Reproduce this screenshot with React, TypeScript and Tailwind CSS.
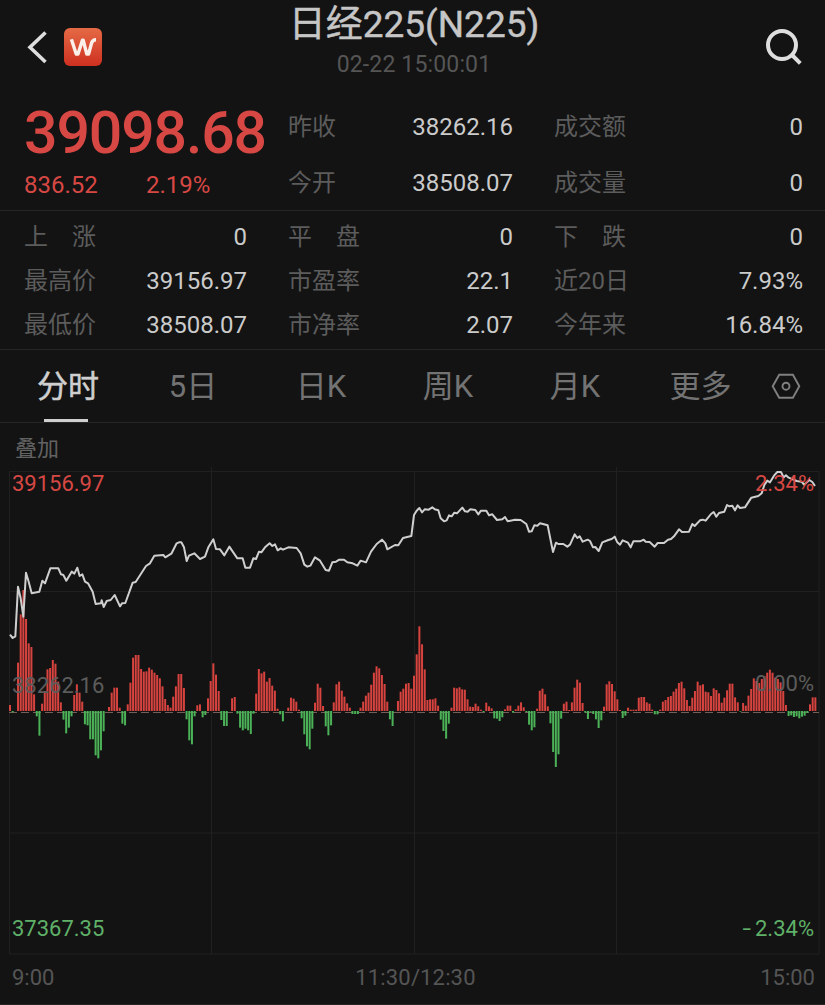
import React from "react";

const BASE = 711;
const STEP = 2.6756;

// Per-minute bars, in thirds of a pixel; negative values hang below the axis.
const bars: number[] = [
  18, -4, 0, 145, 290, 363, 276, 203, 192, 50, -16, -74, 22, 60, 125, 129, 153, 142, 88, 26,
  -26, -67, -50, -16, 48, 80, 55, 28, -40, -43, -85, -85, -133, -142, -118, -61, 0, 12, 55, 70,
  70, 10, -38, -43, 20, 85, 160, 168, 168, 126, 118, 119, 130, 124, 115, 108, 98, 74, 36, 18,
  10, 43, 74, 111, 111, 69, -25, -88, -100, -16, 17, 20, -19, -12, 38, 90, 143, 109, 60, -27,
  -45, -45, 0, 38, 42, -8, -50, -58, -53, -58, -69, -8, 52, 126, 113, 118, 88, 99, 76, 61,
  7, -10, -31, 0, 10, 40, 37, 28, 4, -22, -70, -106, -115, -53, 25, 82, 70, 15, -46, -73,
  -43, 26, 80, 88, 61, 43, 23, 10, -9, -9, -9, 10, 28, 46, 55, 79, 115, 134, 128, 108,
  81, 28, -25, -45, 0, 30, 58, 67, 82, 84, 67, 106, 170, 254, 200, 125, 33, 35, 35, 38,
  16, -26, -60, -83, -38, 10, 70, 68, 71, 65, 64, 35, 13, 12, 22, 14, 4, -3, 25, 14,
  8, -22, -23, -30, -19, 5, 16, 16, -5, 5, 16, 26, 11, -3, -41, -58, -49, 7, 61, 67,
  50, 14, -37, -123, -168, -130, -23, 22, 28, 3, 26, 70, 94, 85, 24, -5, -24, -2, -9, -25,
  -51, -28, 13, 80, 89, 81, 59, 35, 3, -21, -14, 10, 4, 4, 4, 40, 42, 42, 26, 22,
  4, -10, -10, 4, 28, 33, 42, 45, 58, 67, 84, 88, 68, 33, 15, 40, 60, 88, 77, 80,
  58, 56, 45, 68, 63, 53, 25, 40, 62, 82, 82, 41, 26, -2, 24, 16, 46, 66, 98, 90,
  84, 96, 105, 115, 124, 115, 100, 96, 86, 60, 18, -15, -13, -18, -16, -22, -17, -14, -6, 20,
  41, 41,
];

type Segment = [number, string];

// Price polyline, in thirds of a pixel, grouped by horizontal offset.
const segments: Segment[] = [
  [0, "30,524 38,534 46,529 54,380 62,415 70,470 78,338 86,365 95,400 118,395 127,362 135,370 151,325 175,325 183,343 190,345 199,362 215,335 223,341 232,323 239,348 247,343 255,365 264,370 278,395 287,432 303,430 305,421 311,441 320,423 332,420 344,405 360,439 366,430 376,429 398,368 407,366 438,318 450,310 463,287 490,285 496,292 514,281 530,250 537,247 544,247 552,262 560,303 567,287 583,280 600,297"],
  [600, "15,290 25,262 40,238 48,267 60,268 73,286 88,260 112,295 128,295 136,323 150,323 160,295 168,297 177,275 184,277 195,262 209,250 217,258 225,253 233,271 242,265 249,269 265,262 290,264 302,280 313,314 322,320 331,317 345,292 360,302 377,330 387,332 397,307 408,305 418,299 432,299 442,307 458,310 472,317 482,302 498,307 513,275 530,252 546,239 556,250 562,268 585,255 595,256"],
  [1200, "9,234 34,228 42,165 50,152 58,144 66,157 74,148 86,149 97,142 104,148 115,151 122,175 132,184 140,181 147,166 155,169 163,158 171,160 187,143 195,154 203,155 211,148 226,150 235,163 243,152 259,152 267,166 277,163 291,180 307,178 315,171 323,184 345,179 362,180 379,192 387,215 395,214 403,196 412,197 420,190 443,196 459,276 468,248 475,252 490,252 502,260 510,254 524,223 532,234 539,229 548,245 563,239 570,243 579,262 586,261 596,273"],
  [1800, "7,247 25,240 35,237 44,230 52,247 60,254 68,241 84,248 92,262 100,244 120,244 131,239 137,245 149,246 164,260 173,249 192,249 204,239 213,237 222,229 237,208 246,216 267,215 277,192 284,198 300,181 308,179 317,182 333,162 341,156 349,170 357,159 373,155 381,135 388,139 397,137 405,151 413,136 420,144 435,142 454,113 475,108 485,100 493,75 502,62 510,67 522,47 532,36 543,36 551,52 558,46 566,53 590,63 605,65 612,74 628,60 637,66 645,78"],
];

const pricePoints = segments
  .map(([offset, pts]) =>
    pts
      .split(" ")
      .map((p) => {
        const [x, y] = p.split(",").map(Number);
        return `${((x + offset) / 3).toFixed(2)},${(y / 3 + 460).toFixed(2)}`;
      })
      .join(" ")
  )
  .join(" ");

function Stat({ label, value }: { label: string; value: string }) {
  return (
    <div className="flex items-center justify-between leading-8">
      <span className="whitespace-pre text-[#5c5c5c]">{label}</span>
      <span className="text-[#cbcbcb]">{value}</span>
    </div>
  );
}

function Header() {
  return (
    <header className="flex h-[94px] items-start justify-between pl-[27px] pr-[22px]">
      <div className="flex w-[128px] items-center pt-7">
        <svg className="h-[38px] w-[22px]" viewBox="0 0 22 38" fill="none">
          <path d="M18.5 4.5 3 19.3 18.5 34" stroke="#dedede" strokeWidth="3.6" />
        </svg>
        <svg className="ml-[15px] h-[38px] w-[38px]" viewBox="0 0 38 38" fill="none">
          <defs>
            <linearGradient id="brand" x1="0" y1="0" x2="0" y2="1">
              <stop offset="0" stopColor="#e56a45" />
              <stop offset="1" stopColor="#ce3020" />
            </linearGradient>
          </defs>
          <rect width="38" height="38" rx="6" fill="url(#brand)" />
          <path
            d="M7.4 11.2 12.2 26H14L18.4 12.2H19.2L22.8 26H24.6L27.6 15Q28.5 11.7 32 11.7"
            stroke="#fbefe9"
            strokeWidth="3.4"
            strokeLinejoin="round"
          />
        </svg>
      </div>
      <div className="flex flex-col items-center">
        <h1 className="pt-px text-[37px] leading-[48px] font-normal text-[#c6c6c6] [-webkit-text-stroke:0.4px_#c6c6c6]">
          日经225(N225)
        </h1>
        <p className="text-[23px] leading-8 tracking-[0.15px] text-[#555555]">02-22 15:00:01</p>
      </div>
      <div className="flex w-[130px] justify-end pt-7">
        <svg className="h-[38px] w-[38px]" viewBox="0 0 38 38" fill="none" stroke="#dedede">
          <circle cx="17" cy="17" r="14" strokeWidth="4" />
          <path d="m27 27 8.3 8.3" strokeWidth="4" />
        </svg>
      </div>
    </header>
  );
}

function Summary() {
  return (
    <section className="flex h-[117px] border-b border-[#262626] text-2xl">
      <div className="flex w-[288px] flex-col pl-6 text-[#d74844]">
        <div className="text-[59px] leading-[78px] font-medium tracking-[-1.15px]">39098.68</div>
        <div className="flex leading-[26px]">
          <span className="w-[122px]">836.52</span>
          <span>2.19%</span>
        </div>
      </div>
      <div className="grid h-[116px] w-[225px] grid-rows-[56px_56px] pt-[5px]">
        <Stat label="昨收" value="38262.16" />
        <Stat label="今开" value="38508.07" />
      </div>
      <div className="ml-[41px] grid h-[116px] w-[249px] grid-rows-[56px_56px] pt-[5px]">
        <Stat label="成交额" value="0" />
        <Stat label="成交量" value="0" />
      </div>
    </section>
  );
}

function Details() {
  return (
    <section className="grid h-[139px] grid-cols-[223px_225px_249px] content-start gap-x-[41px] border-b border-[#262626] pt-1 pl-6 text-2xl auto-rows-[44px]">
      <Stat label={"上\u3000涨"} value="0" />
      <Stat label={"平\u3000盘"} value="0" />
      <Stat label={"下\u3000跌"} value="0" />
      <Stat label="最高价" value="39156.97" />
      <Stat label="市盈率" value="22.1" />
      <Stat label="近20日" value="7.93%" />
      <Stat label="最低价" value="38508.07" />
      <Stat label="市净率" value="2.07" />
      <Stat label="今年来" value="16.84%" />
    </section>
  );
}

function Tabs() {
  return (
    <nav className="flex h-[73px] border-b border-[#262626] pt-1 pl-[3px] text-[31px] leading-[66px] text-[#737373]">
      <div className="flex w-[126px] flex-col items-center pl-1 text-[#cfcfcf]">
        <span className="h-[65px] [-webkit-text-stroke:0.5px_#cfcfcf]">分时</span>
        <span className="mr-1 h-[3px] w-11 bg-[#cfcfcf]" />
      </div>
      <span className="w-32 text-center">5日</span>
      <span className="w-32 text-center">日K</span>
      <span className="w-[126px] text-center">周K</span>
      <span className="w-32 text-center">月K</span>
      <span className="w-[123px] text-center">更多</span>
      <svg className="mt-[18px] ml-[9px] h-7 w-[30px]" viewBox="0 0 30 28" fill="none" stroke="#808080" strokeWidth="1.9">
        <path d="M8.2 2.8H21.9L28.3 14.3 21.9 25.8H8.2L1.7 14.3Z" />
        <circle cx="15" cy="14.2" r="3.5" />
      </svg>
    </nav>
  );
}

function Chart() {
  return (
    <section className="relative h-[532px] text-[22px] leading-8">
      <svg className="block h-[532px] w-[825px]" viewBox="0 423 825 532" fill="none">
        <g stroke="#202020">
          <path d="M9 471.5H819M9 591.5H819M9 833H819M9 954H819" />
          <path d="M9.5 471V954M211.5 467V954M414.5 471V954M616.5 467V954M819 471V954" />
        </g>
        <path d="M9 712.5H819" stroke="#74605a" strokeDasharray="8 4" />
        {bars.map((v, i) => (
          <rect
            key={i}
            x={9 + i * STEP}
            y={v > 0 ? BASE - v / 3 : BASE}
            width={2}
            height={Math.abs(v) / 3}
            fill={v > 0 ? "#d7433f" : "#4bb257"}
          />
        ))}
        <polyline points={pricePoints} stroke="#cfcfcf" strokeWidth="2" strokeLinejoin="round" />
      </svg>
      <span className="absolute top-[10px] left-[15px] text-[#626262]">叠加</span>
      <span className="absolute top-[45px] left-3 text-[#d74844]">39156.97</span>
      <span className="absolute top-[45px] right-[11px] text-[#d74844]">2.34%</span>
      <span className="absolute top-[247px] left-3 text-[#5c5c5c]">38262.16</span>
      <span className="absolute top-[245px] right-[11px] text-[#5c5c5c]">0.00%</span>
      <span className="absolute top-[490px] left-3 text-[#5fb068]">37367.35</span>
      <span className="absolute top-[490px] right-[11px] flex text-[#5fb068]">
        <span className="mr-1 origin-right scale-x-140">-</span>2.34%
      </span>
    </section>
  );
}

export default function App() {
  return (
    <main className="h-[1005px] w-[825px] overflow-hidden bg-[#131313] font-[Roboto,'Noto_Sans_CJK_SC',sans-serif]">
      <Header />
      <Summary />
      <Details />
      <Tabs />
      <Chart />
      <footer className="flex h-[50px] justify-between border-b border-[#262626] pt-[7px] pr-[10px] pl-3 text-[22px] leading-8 text-[#555555]">
        <span className="w-[100px]">9:00</span>
        <span className="pl-1 tracking-[0.15px]">11:30/12:30</span>
        <span className="w-[100px] text-right">15:00</span>
      </footer>
    </main>
  );
}
